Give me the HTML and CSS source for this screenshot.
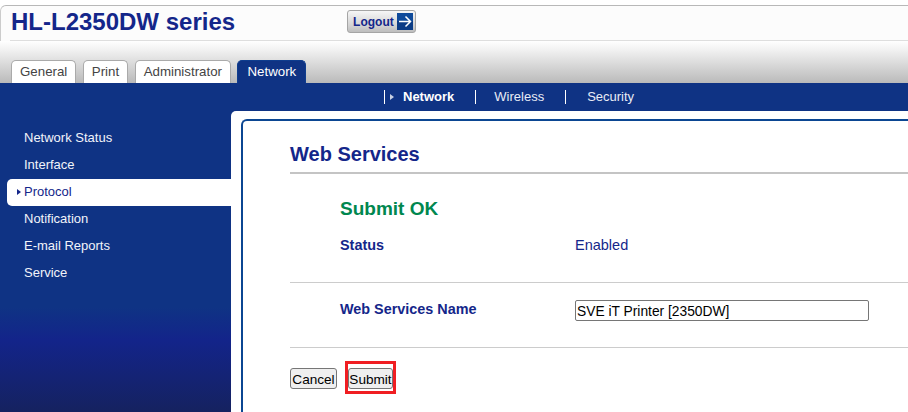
FILE: index.html
```html
<!DOCTYPE html>
<html lang="en">
<head>
<meta charset="utf-8">
<title>HL-L2350DW series</title>
<link rel="stylesheet" href="styles.css">
</head>
<body>
<div class="page">
  <header class="header">
    <h1 class="title">HL-L2350DW series</h1>
    <a class="logout">Logout<svg class="logout-icon" width="16" height="17" viewBox="0 0 16 17"><rect width="16" height="17" fill="#0f4a9a"/><rect y="8" width="16" height="9" fill="#0c3c86"/><path d="M2 8.5H13M8.5 3.5L13.5 8.5L8.5 13.5" fill="none" stroke="#fff" stroke-width="1.5"/></svg></a>
  </header>
  <nav class="tabs">
    <a class="tab">General</a>
    <a class="tab">Print</a>
    <a class="tab">Administrator</a>
    <a class="tab tab-active">Network</a>
  </nav>
  <div class="subnav">
    <a class="subnav-item subnav-current">Network</a>
    <a class="subnav-item">Wireless</a>
    <a class="subnav-item">Security</a>
  </div>
  <div class="main">
    <aside class="sidebar">
      <a class="side-item">Network Status</a>
      <a class="side-item">Interface</a>
      <a class="side-item side-current">Protocol</a>
      <a class="side-item">Notification</a>
      <a class="side-item">E-mail Reports</a>
      <a class="side-item">Service</a>
    </aside>
    <section class="panel">
      <div class="inner">
        <h2 class="heading">Web Services</h2>
        <h3 class="ok">Submit OK</h3>
        <div class="row row-status">
          <span class="label">Status</span>
          <span class="value">Enabled</span>
        </div>
        <div class="row row-name">
          <label class="label" for="wsn">Web Services Name</label>
          <input class="field" id="wsn" type="text" value="SVE iT Printer [2350DW]">
        </div>
        <div class="actions">
          <button class="btn btn-cancel" type="button">Cancel</button>
          <span class="highlight"><button class="btn btn-submit" type="button">Submit</button></span>
        </div>
      </div>
    </section>
  </div>
</div>
</body>
</html>
```
FILE: styles.css
```css
* { box-sizing: border-box; }
html, body { margin: 0; height: 100%; overflow: hidden; background: #fff; }
body { font-family: "Liberation Sans", Arial, sans-serif; }
.page { display: flex; flex-direction: column; height: 412px; padding-top: 5px; }

.header {
  display: flex; align-items: flex-start; height: 36px; padding: 4px 0 0 11px;
  background: #fcfcfc; border-top: 1px solid #b8b8b8; border-left: 1px solid #ccc;
  border-radius: 6px 0 0 0; position: relative;
}
.header::after { content: ""; position: absolute; left: 9px; right: 0; bottom: 0; height: 1px; background: #dedede; }
.title { margin: -1px 0 0 -1px; font-size: 24px; line-height: 26px; font-weight: 700; color: #14268a; white-space: nowrap; }
.logout {
  display: flex; align-items: center; gap: 3px; margin: 0 0 0 112px; width: 69px; height: 23px; padding: 0 4px 0 5px;
  border: 1px solid #a5a5a5; border-radius: 3px; background: linear-gradient(#f6f6f6, #d2d2d2 70%, #bdbdbd);
  font-size: 12px; font-weight: 700; color: #14268a;
}
.logout-icon { flex: none; }

.tabs {
  display: flex; align-items: flex-end; gap: 6.5px; height: 42px; padding-left: 11px;
  background: linear-gradient(#fff, #f2f2f2 20%, #bababa);
}
.tab {
  height: 23px; padding: 0 8px; line-height: 22px; font-size: 13.3px; color: #444; background: #fff;
  border: 1px solid #aaa; border-bottom: 0; border-radius: 5px 5px 0 0;
}
.tab-active { padding: 0 9px; background: #0f3384; color: #fff; border-color: #0f3d8e; }

.subnav { display: flex; align-items: center; height: 28px; padding-left: 384px; background: #0f3384; }
.subnav-item {
  display: block; height: 14px; line-height: 14px; padding: 0 21px 0 18px; border-left: 1px solid #fff;
  font-size: 13px; color: #e8ecf6; white-space: nowrap;
}
.subnav-item + .subnav-item + .subnav-item { padding-left: 21px; }
.subnav-current { position: relative; font-weight: 700; color: #fff; }
.subnav-current::before {
  content: ""; position: absolute; left: 5px; top: 4px;
  border-left: 4px solid #c8d0e4; border-top: 3px solid transparent; border-bottom: 3px solid transparent;
}

.main { display: flex; flex: 1; min-height: 0; background: linear-gradient(#0f3384 196px, #13248a 229px, #15225f 302px); }
.sidebar { flex: none; width: 231px; padding: 14px 0 0 7px; }
.side-item {
  display: block; height: 27px; line-height: 25px; padding-left: 17px; font-size: 13px; color: #f2f4fa; white-space: nowrap;
}
.side-current {
  position: relative; background: #fff; color: #14268a; border-radius: 5px 0 0 5px;
}
.side-current::before {
  content: ""; position: absolute; left: 10px; top: 10px;
  border-left: 4px solid #14268a; border-top: 3px solid transparent; border-bottom: 3px solid transparent;
}

.panel { flex: 1; min-width: 0; padding: 8px 0 0 10px; background: #fff; border-radius: 5px 0 0 0; }
.inner {
  height: 100%; padding: 20px 0 0 47px; border-top: 2px solid #0b4692; border-left: 2px solid #0b4692; border-radius: 6px 0 0 0;
}
.heading {
  margin: 0; height: 33px; font-size: 20px; line-height: 27px; font-weight: 700; color: #14268a; border-bottom: 2px solid #c4c4c4;
}
.ok { margin: 23px 0 0 50px; font-size: 19px; line-height: 24px; font-weight: 700; color: #00874f; }
.row { display: grid; grid-template-columns: 235px 294px; align-items: center; padding-left: 50px; }
.row-status { height: 62px; padding-bottom: 14px; border-bottom: 1px solid #ccc; }
.row-name { height: 65px; padding-bottom: 12px; border-bottom: 1px solid #ccc; }
.label { font-size: 14.4px; font-weight: 700; color: #14268a; white-space: nowrap; }
.value { font-size: 14.5px; color: #14268a; }
.field {
  width: 294px; height: 21px; padding: 2px 1px 0; margin: 2px 0 0; border: 1px solid #767676; border-radius: 2px;
  font: 13.8px "Liberation Sans", Arial, sans-serif; color: #000; background: #fff;
}
.actions { display: flex; align-items: center; gap: 11px; margin-top: 20px; }
.btn {
  height: 21px; padding: 1px 0 0; margin: 0; border: 1px solid #767676; border-radius: 3px; background: #efefef;
  font: 13.6px "Liberation Sans", Arial, sans-serif; color: #000;
}
.btn-cancel { width: 47px; }
.btn-submit { width: 45px; display: block; }
.highlight { position: relative; display: block; }
.highlight::after { content: ""; position: absolute; inset: -7px -3px -5px -3px; border: 3px solid #f01e22; }
```
